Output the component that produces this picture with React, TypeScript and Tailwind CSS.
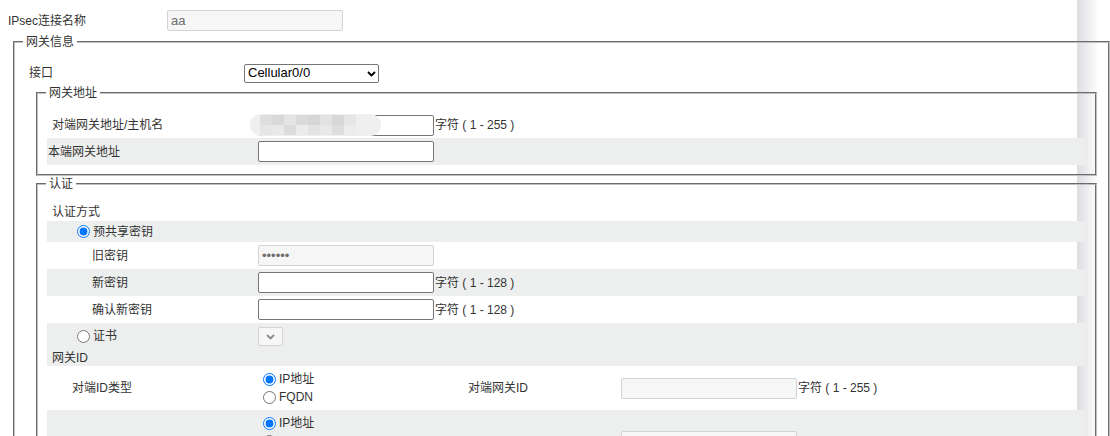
import React from "react";

const grayRow = "bg-[#edefee]";

const mosaic = [
  "bg-[#dedede]",
  "bg-[#d9d9d9]",
  "bg-[#e4e4e4]",
  "bg-[#dadada]",
  "bg-[#d6d6d6]",
  "bg-[#e2e2e2]",
  "bg-[#d8d8d8]",
  "bg-[#e6e6e6]",
  "bg-[#e6e6e6]",
  "bg-[#e9e9e9]",
  "bg-[#dcdcdc]",
  "bg-[#ebebeb]",
  "bg-[#e3e3e3]",
  "bg-[#e8e8e8]",
  "bg-[#dddddd]",
  "bg-[#ececec]",
];

function Chevron({ className = "" }: { className?: string }) {
  return (
    <svg
      width="9"
      height="6"
      viewBox="0 0 9 6"
      className={"pointer-events-none absolute " + className}
    >
      <path d="M1 1 L4.5 4.5 L8 1" fill="none" stroke="currentColor" strokeWidth="1.8" />
    </svg>
  );
}

function TextInput({ disabled = false, value, type = "text" }: { disabled?: boolean; value?: string; type?: string }) {
  return (
    <input
      type={type}
      disabled={disabled}
      defaultValue={value}
      className={
        "h-[21px] w-[176px] rounded-[2px] border px-[3px] text-[13px] " +
        (disabled
          ? "border-[#d3d3d3] bg-[#f6f6f6] text-[#6d6d6d]"
          : "border-[#767676] bg-white text-black")
      }
    />
  );
}

function Range({ text }: { text: string }) {
  return <span className="ml-px whitespace-nowrap">字符 ( {text} )</span>;
}

function Radio({ name, checked = false, label }: { name: string; checked?: boolean; label: string }) {
  return (
    <label className="flex items-center">
      <input type="radio" name={name} defaultChecked={checked} className="m-0 mr-[3px] h-[13px] w-[13px]" />
      <span>{label}</span>
    </label>
  );
}

function Fieldset({ legend, className = "", children }: { legend: string; className?: string; children: React.ReactNode }) {
  return (
    <fieldset className={"border-2 border-[#c0c0c0] [border-style:groove] " + className}>
      <legend className="ml-[8px] px-[3px] leading-[16px]">{legend}</legend>
      {children}
    </fieldset>
  );
}

export default function App() {
  return (
    <div className="h-[436px] overflow-hidden bg-[linear-gradient(to_right,#ffffff_1077px,#dcdde1_1077px,#ffffff_1099px)] font-['Liberation_Sans','Noto_Sans_CJK_SC',sans-serif] text-[12px] leading-[16px] text-[#333]">
      <div className="mt-[10px] flex h-[21px] items-center pl-[8px]">
        <div className="w-[159px]">IPsec连接名称</div>
        <TextInput disabled value="aa" />
      </div>

      <Fieldset legend="网关信息" className="ml-[13px] mt-[3px] w-[1097px]">
        <div className="mt-[11px] flex h-[24px] items-center pl-[14px]">
          <div className="w-[215px]">接口</div>
          <div className="relative h-[19px] w-[135px]">
            <select className="h-full w-full appearance-none rounded-[2px] border border-[#767676] bg-white pl-[3px] text-[13px] text-black">
              <option>Cellular0/0</option>
            </select>
            <Chevron className="right-[3px] top-[7px] text-black" />
          </div>
        </div>

        <Fieldset legend="网关地址" className="ml-[21px] mr-[11px]">
          <div className="pb-[9px] pl-[9px] pr-[10px] pt-[11px]">
            <div className="flex h-[26px] items-center">
              <div className="w-[211px] pl-[5px]">对端网关地址/主机名</div>
              <div className="relative">
                <TextInput />
                <div className="absolute left-[-8px] top-[-1px] flex h-[22px] w-[131px] items-center overflow-hidden rounded-full bg-[#efefef] px-[10px]">
                  <div className="grid grid-cols-8 grid-rows-2">
                    {mosaic.map((c, i) => (
                      <div key={i} className={"h-[10px] w-[12px] " + c} />
                    ))}
                  </div>
                </div>
              </div>
              <Range text="1 - 255" />
            </div>
            <div className={"flex h-[27px] items-center " + grayRow}>
              <div className="w-[211px] pl-[1px]">本端网关地址</div>
              <TextInput />
            </div>
          </div>
        </Fieldset>

        <Fieldset legend="认证" className="ml-[21px] mr-[11px]">
          <div className="pl-[9px] pr-[10px] pt-[11px]">
            <div className="flex h-[18px] items-center pl-[5px]">认证方式</div>
            <div className={"flex h-[21px] items-center pl-[30px] " + grayRow}>
              <Radio name="auth" checked label="预共享密钥" />
            </div>
            <div className="flex h-[27px] items-center">
              <div className="w-[211px] pl-[45px]">旧密钥</div>
              <TextInput disabled type="password" value="aaaaaa" />
            </div>
            <div className={"flex h-[27px] items-center " + grayRow}>
              <div className="w-[211px] pl-[45px]">新密钥</div>
              <TextInput type="password" />
              <Range text="1 - 128" />
            </div>
            <div className="flex h-[27px] items-center">
              <div className="w-[211px] pl-[45px]">确认新密钥</div>
              <TextInput type="password" />
              <Range text="1 - 128" />
            </div>
            <div className={grayRow}>
              <div className="flex h-[26px] items-center">
                <div className="w-[211px] pl-[30px]">
                  <Radio name="auth" label="证书" />
                </div>
                <div className="relative h-[19px] w-[25px]">
                  <select disabled className="h-full w-full appearance-none rounded-[2px] border border-[#d3d3d3] bg-[#f6f6f6]" />
                  <Chevron className="left-[8px] top-[7px] text-[#8a8a8a]" />
                </div>
              </div>
              <div className="flex h-[17px] items-center pl-[5px]">网关ID</div>
            </div>
            <div className="flex h-[44px] items-center">
              <div className="w-[216px] pl-[25px]">对端ID类型</div>
              <div className="flex w-[205px] flex-col">
                <div className="flex h-[18px] items-center">
                  <Radio name="peer" checked label="IP地址" />
                </div>
                <div className="flex h-[18px] items-center">
                  <Radio name="peer" label="FQDN" />
                </div>
              </div>
              <div className="w-[153px]">对端网关ID</div>
              <TextInput disabled />
              <Range text="1 - 255" />
            </div>
            <div className={"flex h-[62px] items-center " + grayRow}>
              <div className="w-[216px]" />
              <div className="flex w-[358px] flex-col">
                <div className="flex h-[18px] items-center">
                  <Radio name="local" checked label="IP地址" />
                </div>
                <div className="flex h-[18px] items-center">
                  <Radio name="local" label="FQDN" />
                </div>
                <div className="flex h-[18px] items-center">
                  <Radio name="local" label="User FQDN" />
                </div>
              </div>
              <TextInput disabled />
            </div>
          </div>
        </Fieldset>
      </Fieldset>
    </div>
  );
}
